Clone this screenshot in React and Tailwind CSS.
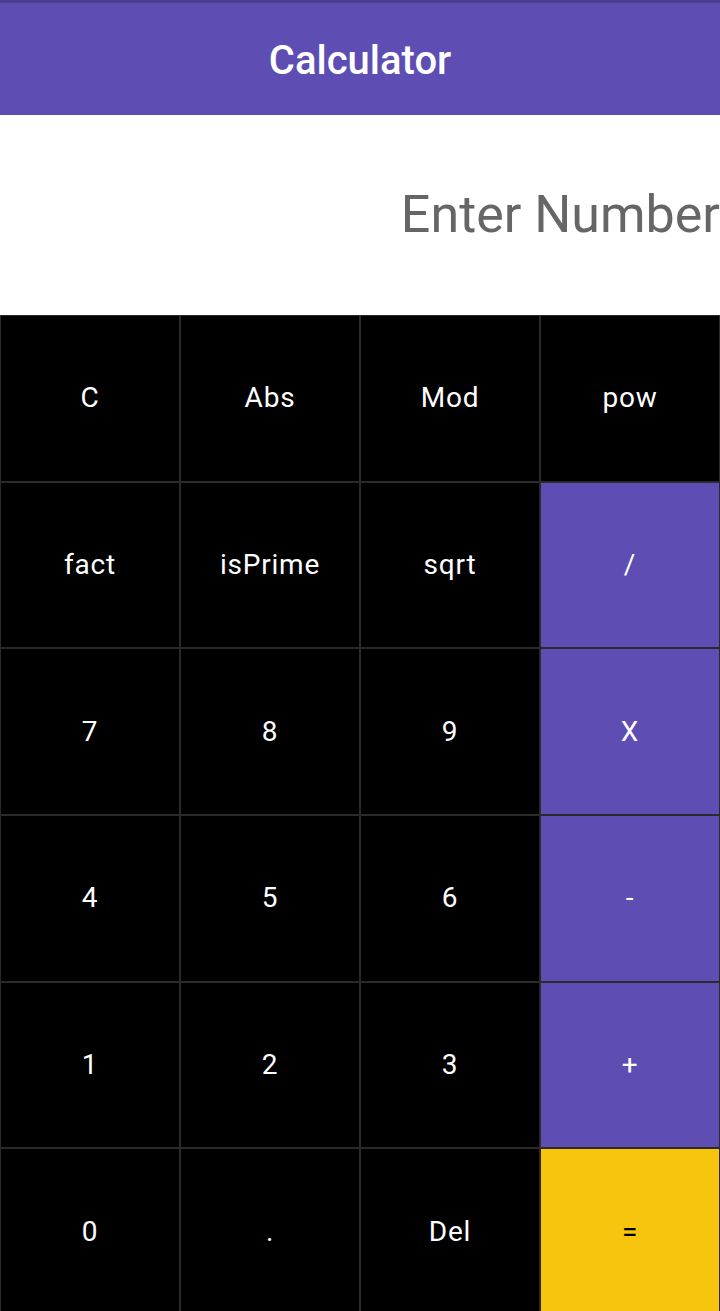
import React, { useState } from 'react';

const keys = [
  { label: 'C' }, { label: 'Abs' }, { label: 'Mod' }, { label: 'pow' },
  { label: 'fact' }, { label: 'isPrime' }, { label: 'sqrt' }, { label: '/', kind: 'op' },
  { label: '7' }, { label: '8' }, { label: '9' }, { label: 'X', kind: 'op' },
  { label: '4' }, { label: '5' }, { label: '6' }, { label: '-', kind: 'op' },
  { label: '1' }, { label: '2' }, { label: '3' }, { label: '+', kind: 'op' },
  { label: '0' }, { label: '.' }, { label: 'Del' }, { label: '=', kind: 'eq' },
];

const App = () => {
  const [value, setValue] = useState('');

  const keyClass = (kind) => {
    if (kind === 'op') return 'bg-[#5e4db2] text-white';
    if (kind === 'eq') return 'bg-[#f7c50d] text-black';
    return 'bg-black text-white';
  };

  return (
    <div className="min-h-screen w-[720px] bg-white font-['Roboto',sans-serif]">
      <div className="h-[3px] bg-[#4a3d93]" />
      <header className="h-[112px] pt-[3px] bg-[#5e4db2] flex items-center justify-center">
        <h1 className="text-[40px] font-medium text-white">Calculator</h1>
      </header>

      <div className="h-[200px] flex items-center justify-end">
        <input
          value={value}
          onChange={(e) => setValue(e.target.value)}
          placeholder="Enter Number"
          className="w-full text-right text-[52px] text-[#222] placeholder:text-[#666666] outline-none bg-transparent"
        />
      </div>

      <div className="grid grid-cols-4 auto-rows-[166.67px] bg-black">
        {keys.map((k) => (
          <button
            key={k.label}
            className={`${keyClass(k.kind)} border border-[#2a2a2a] flex items-center justify-center text-[28px] tracking-[0.8px]`}
          >
            {k.label}
          </button>
        ))}
      </div>
    </div>
  );
};

export default App;
